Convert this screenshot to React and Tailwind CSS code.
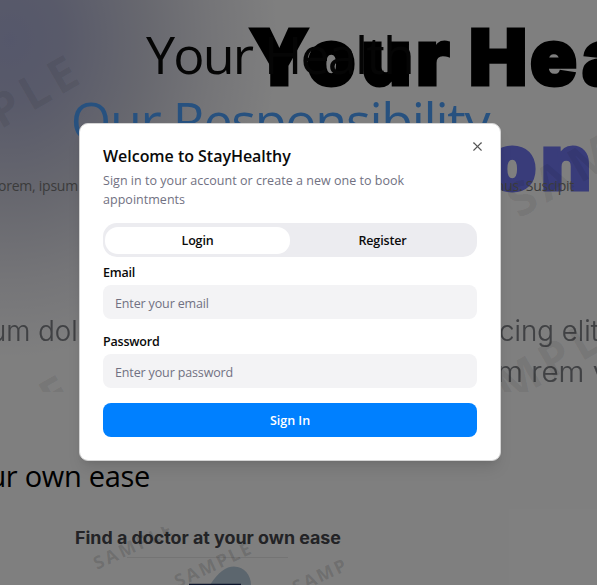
import { X } from "lucide-react";

const SANS = "font-['Open_Sans','Noto_Sans',sans-serif]";

function Poster() {
  return (
    <svg className="absolute inset-0 h-[585px] w-[597px]" viewBox="0 0 597 585" fontFamily="Inter, sans-serif">
      <defs>
        <radialGradient id="glow" gradientUnits="userSpaceOnUse" cx="0" cy="0" r="1" gradientTransform="translate(10 40) scale(270 320)">
          <stop offset="0" stopColor="#abafd6" />
          <stop offset="0.2" stopColor="#b2b5d4" />
          <stop offset="0.5" stopColor="#cfd0de" />
          <stop offset="0.75" stopColor="#eaeaf0" />
          <stop offset="1" stopColor="#ffffff" />
        </radialGradient>
        <filter id="soft" x="-5%" y="-5%" width="110%" height="110%">
          <feGaussianBlur stdDeviation="0.7" />
        </filter>
        <clipPath id="banner"><rect width="597" height="392" /></clipPath>
        <clipPath id="card"><rect x="70" y="527" width="277" height="58" /></clipPath>
      </defs>
      <rect width="597" height="392" fill="url(#glow)" />
      <g filter="url(#soft)">
        <g fontWeight="900" fontSize="77.5" stroke="#000" strokeWidth="3">
          <text y="85" x="249 307 361 416 469 530 582">YourHea</text>
        </g>
        <g fontWeight="900" fontSize="77.5" fill="#7279f4" stroke="#7279f4" strokeWidth="3">
          <text y="190" x="488 541 597">ons</text>
        </g>
        <g fontWeight="300" fontSize="28.5" fill="#808388" stroke="#808388" strokeWidth="0.2">
          <text y="341" x="-10" textLength="104" lengthAdjust="spacingAndGlyphs">um dolo</text>
          <text y="341" x="499" textLength="100" lengthAdjust="spacingAndGlyphs">cing elit</text>
          <text y="382" x="497" textLength="129" lengthAdjust="spacingAndGlyphs">m rem ve</text>
        </g>
      </g>
      <g clipPath="url(#banner)" fontWeight="700" fontSize="47" fill="#000" fillOpacity="0.08" fontFamily="Open Sans, sans-serif">
        <text transform="translate(-104 190) rotate(-30)" letterSpacing="6">SAMPLE</text>
        <text transform="translate(519 219) rotate(-30)" letterSpacing="6">SAMPLE</text>
        <text transform="translate(446 440) rotate(-30)" letterSpacing="6">SAMPLE</text>
        <text transform="translate(-112 510) rotate(-30)" letterSpacing="6">SAMPLE</text>
      </g>
      <text x="75" y="544" fontSize="17" fontWeight="700" fill="#46474c" textLength="266" lengthAdjust="spacingAndGlyphs">Find a doctor at your own ease</text>
      <path d="M127 557.5H288" stroke="#e9e9e9" />
      <path d="M210 585C218 572 226 566.5 234 566.5C244 566.5 251 575 251 585Z" fill="#b9ccdc" />
      <path d="M189 584.5H241" stroke="#1c2c59" strokeWidth="1.5" />
      <g clipPath="url(#card)" fontWeight="700" fontSize="18" fill="#000" fillOpacity="0.14" fontFamily="Open Sans, sans-serif">
        <text transform="translate(97 570) rotate(-25)" textLength="84">SAMPLE</text>
        <text transform="translate(178 588) rotate(-25)" textLength="82">SAMPLE</text>
        <text transform="translate(296 594) rotate(-25)" textLength="57">SAMP</text>
      </g>
    </svg>
  );
}

function Field({ label, type, placeholder, height }) {
  return (
    <label className="flex flex-col">
      <span className="h-[21px] text-[12.5px] leading-[18px] font-semibold tracking-[-0.2px] text-[#0a0a0a]">{label}</span>
      <input
        type={type}
        placeholder={placeholder}
        className={`${height} w-full rounded-[8px] bg-[#f3f3f5] px-[12px] pt-[2px] text-[12.5px] tracking-[-0.14px] outline-none placeholder:text-[#717182]`}
      />
    </label>
  );
}

export default function App() {
  return (
    <div className={`relative h-[585px] w-[597px] overflow-hidden bg-white ${SANS}`}>
      <Poster />
      <main className="relative -ml-[17px] flex w-[597px] flex-col items-center">
        <h1 className="flex flex-col items-center pt-[21px] text-[52px] leading-[66px] font-normal whitespace-nowrap">
          <span className="mr-[4px] tracking-[-1.8px] text-[#0a0a0a]">Your Health</span>
          <span className="mr-[3px] tracking-[-1.3px] text-[#4fa3ff]">Our Responsibility</span>
        </h1>
        <p className="mt-[21px] mr-[2px] flex w-[587px] justify-between text-[14px] leading-[24px] tracking-[-0.25px] whitespace-nowrap text-[#777]">
          <span className="ml-[4px]">Lorem, ipsum</span>
          <span>ducimus. Suscipit</span>
        </p>
        <h2 className="mt-[258px] mr-auto flex w-[167px] justify-end text-[29px] leading-[40px] tracking-[-0.3px] whitespace-nowrap text-black">at your own ease</h2>
      </main>
      <div className="absolute inset-0 flex items-start bg-black/50 pt-[123px] pl-[79px]">
        <section className="relative h-[338px] w-[422px] rounded-[9px] border border-[#d4d4d4] bg-white px-[23px] pt-[21px] shadow-lg">
          <button className="absolute top-[15px] right-[15px] text-[#555]" aria-label="Close">
            <X size={15} strokeWidth={1.8} />
          </button>
          <h3 className="text-[16px] leading-[22px] font-semibold tracking-[-0.03px] text-[#0a0a0a]">Welcome to StayHealthy</h3>
          <p className="mt-[4px] text-[12.5px] leading-[19px] tracking-[0.03px] text-[#717182]">
            Sign in to your account or create a new one to book<br />appointments
          </p>
          <div className="mt-[14px] flex h-[34px] rounded-[14px] bg-[#ececf0] px-[2px] pt-[4px] pb-[3px] text-[12.5px] font-semibold tracking-[-0.15px] text-[#0a0a0a]">
            <button className="flex-1 rounded-[13px] bg-white pt-[2px]">Login</button>
            <button className="flex-1 pt-[2px]">Register</button>
          </div>
          <form className="mt-[7px] flex flex-col">
            <Field label="Email" type="email" placeholder="Enter your email" height="h-[34px]" />
            <div className="mt-[14px]">
              <Field label="Password" type="password" placeholder="Enter your password" height="h-[34px]" />
            </div>
            <button className="mt-[15px] h-[34px] rounded-[8px] bg-[#0080ff] pt-[2px] text-[12.5px] font-semibold text-white">Sign In</button>
          </form>
        </section>
      </div>
    </div>
  );
}
